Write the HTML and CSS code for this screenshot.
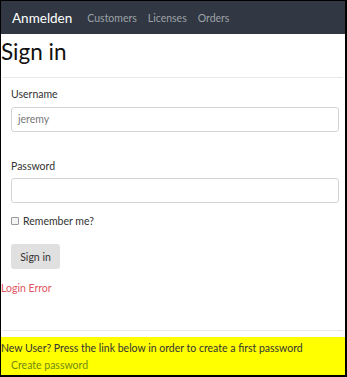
FILE: index.html
```html
<!DOCTYPE html>
<html>
<head>
<meta charset="utf-8">
<link rel="stylesheet" href="styles.css">
</head>
<body>
<div class="frame">
  <nav class="navbar">
    <span class="brand">Anmelden</span>
    <a class="nav-link">Customers</a>
    <a class="nav-link">Licenses</a>
    <a class="nav-link">Orders</a>
  </nav>
  <h1 class="title">Sign in</h1>
  <hr class="rule">
  <form class="form">
    <label class="label">Username</label>
    <div class="input">jeremy</div>
    <label class="label pw">Password</label>
    <div class="input"></div>
    <div class="remember"><span class="box"></span><span>Remember me?</span></div>
    <button type="button" class="btn">Sign in</button>
  </form>
  <div class="error">Login Error</div>
  <hr class="rule bottom">
  <div class="notice">
    <div class="notice-text">New User? Press the link below in order to create a first password</div>
    <a class="create">Create password</a>
  </div>
</div>
</body>
</html>
```
FILE: styles.css
```css
html, body { margin: 0; padding: 0; background: #fff; }
body { font-family: "Lato", "Open Sans", sans-serif; color: #333; }
.frame {
  width: 344px; height: 374px;
  border-left: 1px solid #000; border-top: 1px solid #000;
  border-right: 2px solid #000; border-bottom: 2px solid #000;
  display: flex; flex-direction: column; overflow: hidden;
}
.frame > * { flex-shrink: 0; }
.navbar {
  height: 33px; background: #313843; display: flex; align-items: center;
  padding-left: 11px;
}
.brand { color: #fff; font-size: 13.5px; margin-right: 15px; }
.nav-link { color: #9ea2a8; font-size: 10.5px; margin-right: 11px; }
.title { margin: 3px 0 0 0; font-size: 22.5px; font-weight: 400; line-height: 30px; color: #111; }
.rule { margin: 10px 2px 0 2px; border: 0; border-top: 1px solid #e8e8e8; height: 0; }
.form { display: flex; flex-direction: column; padding: 0 6px 0 10px; }
.label { font-size: 10.5px; line-height: 16px; margin-top: 8px; color: #333; }
.label.pw { margin-top: 26px; }
.input {
  margin-top: 5px; height: 23px; border: 1px solid #d4d4d4; border-radius: 3px;
  font-size: 10.5px; line-height: 23px; padding-left: 6px; color: #777;
}
.label.pw + .input { margin-top: 4px; }
.remember { display: flex; align-items: center; margin-top: 10px; font-size: 10.5px; color: #333; line-height: 16px; }
.box { width: 6px; height: 6px; border: 1px solid #999; border-radius: 1px; margin-right: 4px; background: #f4f4f4; }
.btn {
  align-self: flex-start; margin-top: 15px; height: 25px; width: 49px; padding: 0;
  border: 0; border-radius: 3px; background: #e0e0e0; color: #333; font-family: inherit; font-size: 10.5px;
}
.error { margin-top: 11px; font-size: 10.5px; color: #e0555f; line-height: 16px; }
.rule.bottom { margin-top: 34px; }
.notice {
  margin-top: 6px; background: #ffff00; flex: 1 0 auto; font-size: 10.5px; color: #333;
  padding-top: 3px; line-height: 17px;
}
.notice-text { white-space: nowrap; }
.create { display: block; padding-left: 10px; color: #6f8a14; }
```
